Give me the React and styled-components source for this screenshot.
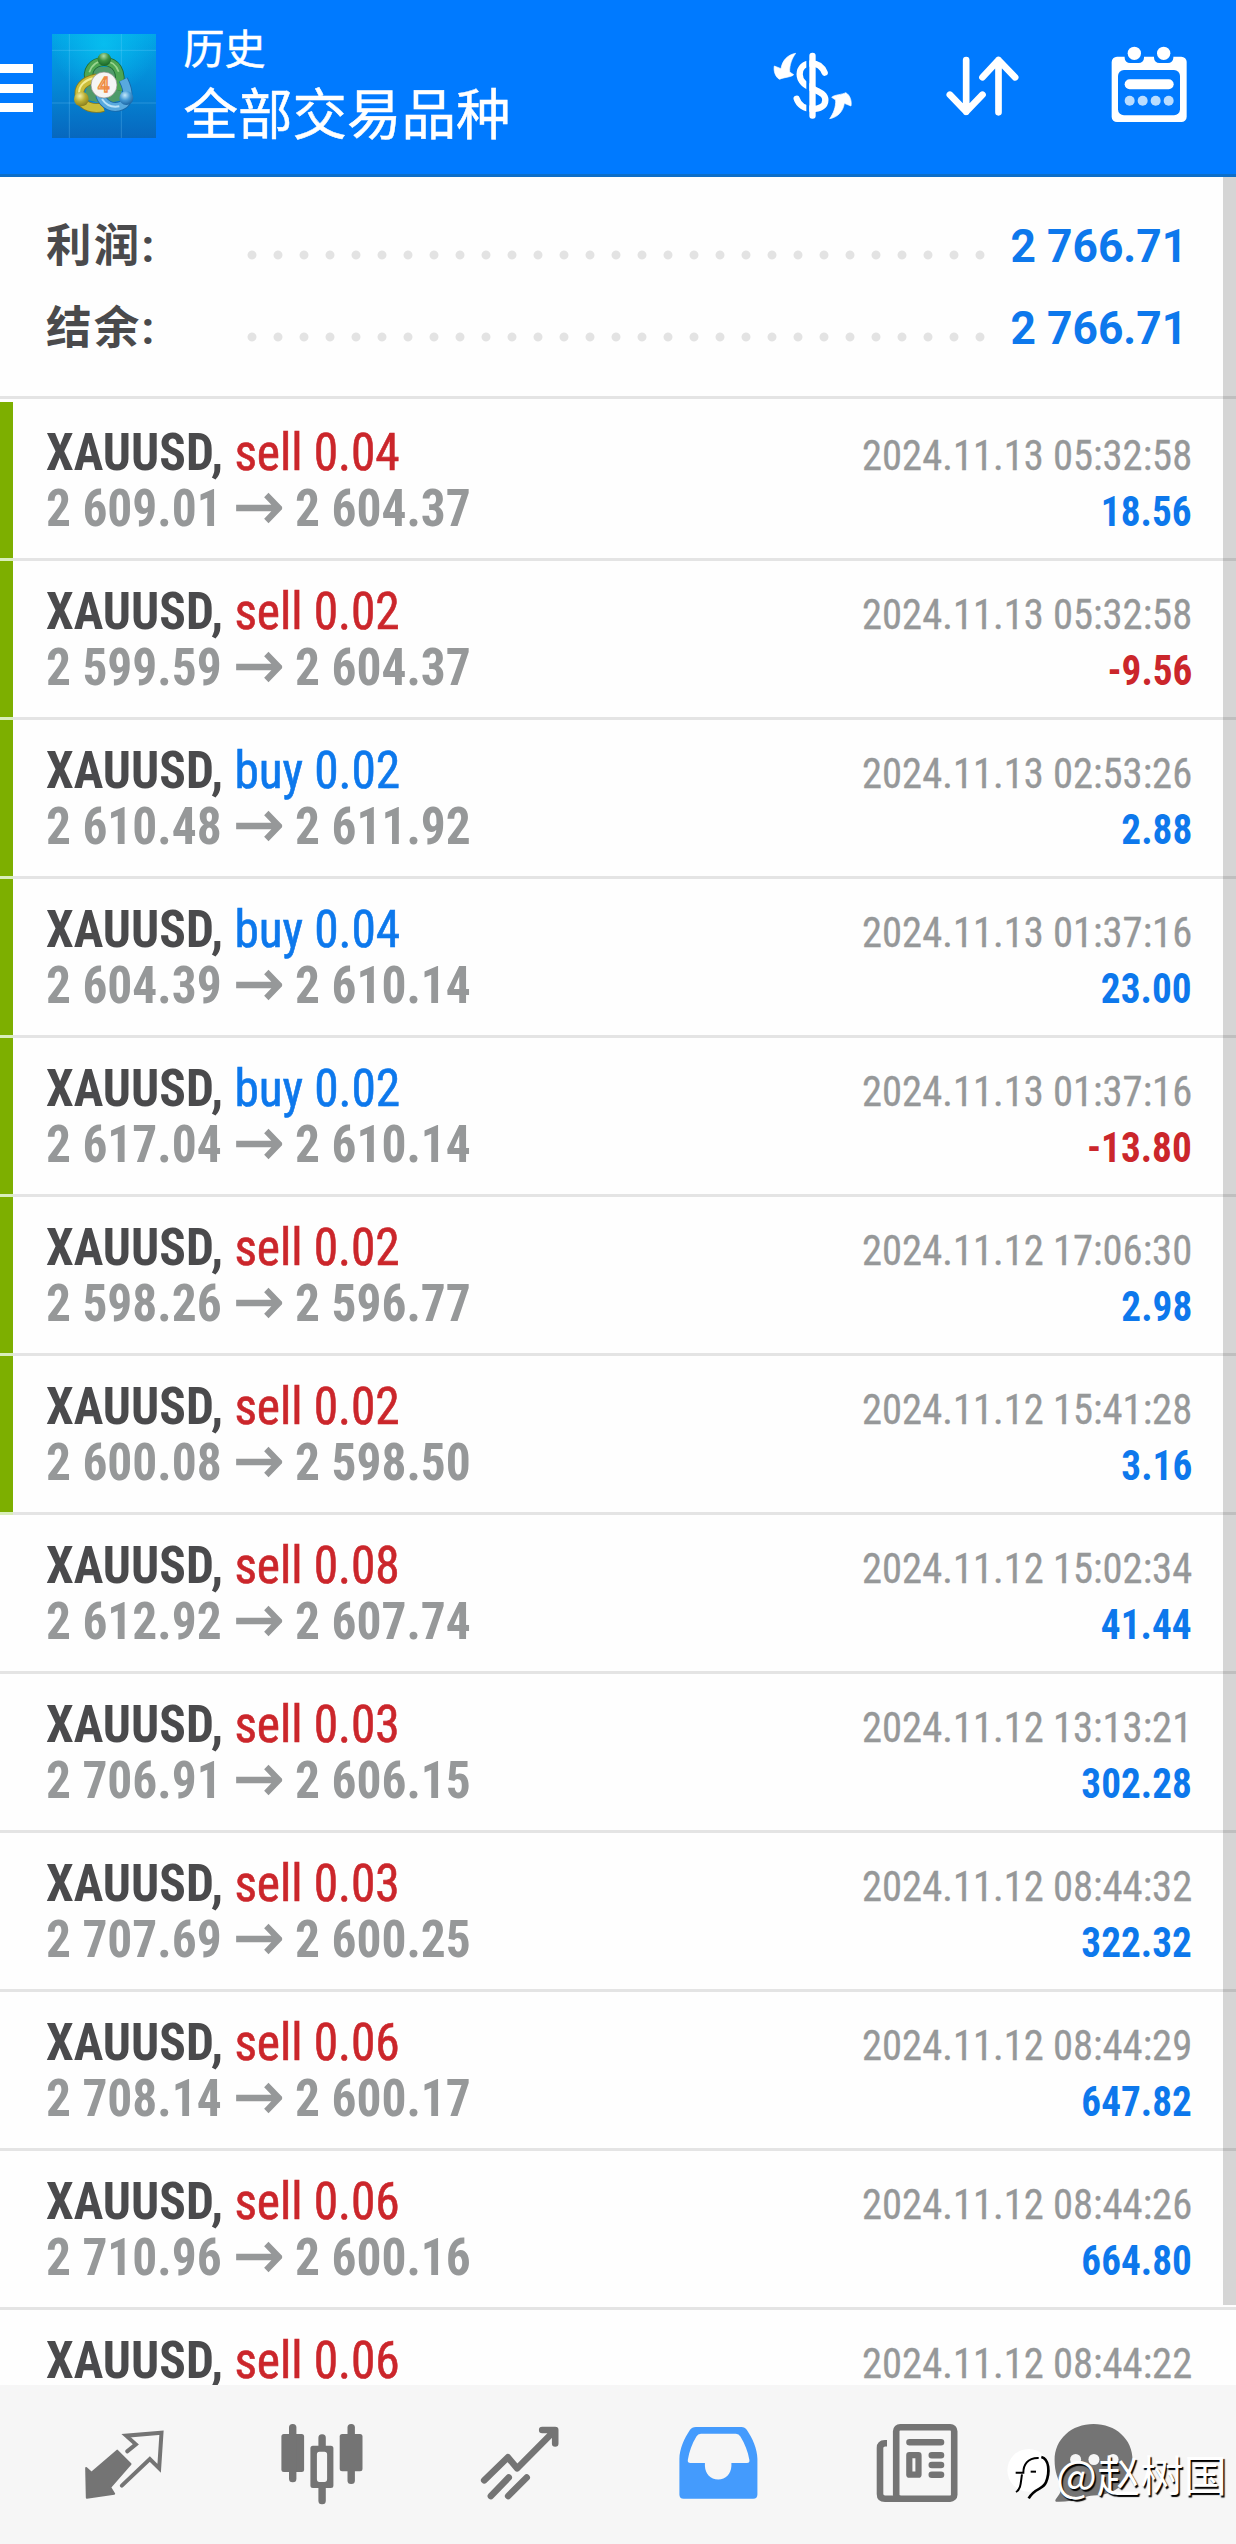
import React from "react";
import styled, { createGlobalStyle } from "styled-components";

const colors = {
  header: "#007aff",
  buy: "#0d78ec",
  sell: "#cb262b",
  dark: "#4a4a4c",
  muted: "#969899",
  line: "#e4e4e4",
  icon: "#747474",
  active: "#449bfd",
  closed: "#7daf00",
};

const GlobalStyle = createGlobalStyle`
  body {
    margin: 0;
    background: #fff;
  }
`;

const Screen = styled.div`
  position: relative;
  display: flex;
  flex-direction: column;
  width: 1236px;
  height: 2544px;
  overflow: hidden;
  background: #fefefe;
  font-family: Roboto, "Noto Sans CJK SC", sans-serif;
`;

const Header = styled.header`
  display: flex;
  align-items: flex-start;
  box-sizing: border-box;
  flex: none;
  height: 177px;
  background: ${colors.header};
  border-bottom: 3px solid #0d6ec8;
  color: #fff;
`;

const MenuButton = styled.div`
  display: flex;
  flex-direction: column;
  gap: 10.5px;
  width: 33px;
  margin: 64px 19px 0 0;
`;

const MenuBar = styled.span`
  height: 9px;
  background: #fff;
`;

const AppIcon = styled.svg`
  flex: none;
  width: 104px;
  height: 104px;
  margin-top: 34px;
`;

const Titles = styled.div`
  display: flex;
  flex-direction: column;
  flex: 1;
  margin: 16px 0 0 27.5px;
  font-family: "Noto Sans CJK SC", sans-serif;
  white-space: nowrap;
  -webkit-text-stroke: 0.5px #fff;
`;

const Subtitle = styled.div`
  font-size: 41px;
  line-height: 60px;
`;

const Title = styled.div`
  font-size: 54.5px;
  line-height: 70px;
`;

const HeaderActions = styled.div`
  display: flex;
  align-items: flex-start;
  gap: 92px;
  margin: 45px 49px 0 0;
`;

const ActionIcon = styled.svg`
  display: block;
  flex: none;
  width: ${(p) => p.$w}px;
  height: 78px;
`;

const Body = styled.main`
  position: relative;
  flex: none;
  height: 2208px;
  overflow: hidden;
`;

const Scrollbar = styled.div`
  position: absolute;
  top: 0;
  right: 0;
  width: 13px;
  height: 2128px;
  background: rgba(0, 0, 0, 0.16);
`;

const Summary = styled.section`
  box-sizing: border-box;
  height: 222px;
  padding: 28px 48.5px 0 46px;
  border-bottom: 3px solid ${colors.line};
  margin-bottom: 3px;
`;

const SummaryRow = styled.div`
  display: flex;
  align-items: flex-start;
  height: 82px;
  font-size: 45.5px;
  font-weight: 700;
  line-height: 83px;
  white-space: pre;
`;

const SummaryLabel = styled.span`
  width: 193px;
  color: ${colors.dark};
  letter-spacing: 2.2px;
`;

const Leader = styled.span`
  width: 754px;
  height: 26px;
  margin-top: 36.5px;
  background: radial-gradient(circle, #e3e3e3 4px, transparent 4.9px) 0 0 / 26px 26px repeat-x;
`;

const SummaryValue = styled.span`
  margin-left: auto;
  color: ${colors.buy};
  transform: scaleX(0.975);
  transform-origin: right;
`;

const Deal = styled.article`
  box-sizing: border-box;
  height: 159px;
  padding: 23px 44px 0 33px;
  border-left: 13px solid ${(p) => (p.$marked ? colors.closed : "transparent")};
  background: linear-gradient(${colors.line}, ${colors.line}) 0 100% / 100% 3px no-repeat;
  background-origin: ${(p) => (p.$marked ? "padding-box" : "border-box")};
`;

const MarkedSeam = styled.div`
  position: relative;
  width: 13px;
  height: 3px;
  margin-top: -3px;
  background: #d9eebb;
`;

const DealLine = styled.div`
  display: flex;
  align-items: baseline;
  justify-content: space-between;
  height: 56px;
  font-family: "Roboto Condensed", Roboto, sans-serif;
  font-stretch: condensed;
  line-height: 56px;
  white-space: pre;
`;

const Symbol = styled.div`
  color: ${colors.dark};
  font-size: 51.5px;
  font-weight: 700;
  transform: scaleX(0.96);
  transform-origin: left;
`;

const Side = styled.span`
  color: ${(p) => (p.$side === "buy" ? colors.buy : colors.sell)};
  font-weight: 400;
  letter-spacing: -0.1px;
  -webkit-text-stroke: 0.6px currentColor;
`;

const Prices = styled.div`
  display: flex;
  align-items: baseline;
  color: ${colors.muted};
  font-size: 51.5px;
  font-weight: 700;
  transform: scaleX(0.96);
  transform-origin: left;
`;

const PriceArrow = styled.svg`
  align-self: flex-start;
  width: 48px;
  height: 32px;
  margin: 11px 13.5px 0 15px;
  fill: none;
  stroke: currentColor;
  stroke-width: 6.4;
`;

const Time = styled.div`
  color: ${colors.muted};
  font-size: 42.2px;
  font-weight: 400;
  transform: scaleX(0.962);
  transform-origin: right;
  -webkit-text-stroke: 0.3px currentColor;
`;

const Profit = styled.div`
  color: ${(p) => (p.$loss ? colors.sell : colors.buy)};
  font-size: 42.2px;
  font-weight: 700;
  transform: scaleX(0.93);
  transform-origin: right;
`;

const TabBar = styled.nav`
  display: grid;
  grid-template-columns: repeat(5, 198.2px) 156px;
  box-sizing: border-box;
  flex: none;
  height: 159px;
  padding: 35px 0 0 25.4px;
  background: #f6f6f6;
`;

const Tab = styled.div`
  display: flex;
  justify-content: center;
  color: ${(p) => (p.$active ? colors.active : colors.icon)};
`;

const TabIcon = styled.svg`
  display: block;
  width: 90px;
  height: 90px;
  fill: currentColor;
`;

const Watermark = styled.div`
  position: absolute;
  left: 1004px;
  top: 2442px;
  display: flex;
  align-items: center;
  color: #fff;
  font-family: "Noto Sans CJK SC", sans-serif;
  font-size: 43.3px;
  font-weight: 400;
  line-height: 60px;
  white-space: nowrap;
  text-shadow: 1.5px 1.5px 1px #000;
`;

const WatermarkLogo = styled.svg`
  width: 52px;
  height: 56px;
  margin-top: 5px;
`;

function BrandIcon() {
  return (
    <AppIcon viewBox="36 31 312 312">
      <defs>
        <linearGradient id="tile" x1="0" y1="0" x2="0" y2="1">
          <stop offset="0" stopColor="#02a6e6" />
          <stop offset="0.5" stopColor="#0488d6" />
          <stop offset="1" stopColor="#0767be" />
        </linearGradient>
        <radialGradient id="glow" cx="0.5" cy="0.1" r="0.5">
          <stop offset="0" stopColor="#08c4f2" stopOpacity="0.8" />
          <stop offset="1" stopColor="#08c4f2" stopOpacity="0" />
        </radialGradient>
        <radialGradient id="green" cx="0.45" cy="0.25" r="0.75">
          <stop offset="0" stopColor="#b2dba5" />
          <stop offset="0.5" stopColor="#3c9143" />
          <stop offset="1" stopColor="#176428" />
        </radialGradient>
        <radialGradient id="yellow" cx="0.4" cy="0.3" r="0.75">
          <stop offset="0" stopColor="#f4efa2" />
          <stop offset="0.5" stopColor="#b9ad32" />
          <stop offset="1" stopColor="#84791c" />
        </radialGradient>
        <radialGradient id="blue" cx="0.4" cy="0.3" r="0.75">
          <stop offset="0" stopColor="#c3e8fb" />
          <stop offset="0.5" stopColor="#4499d4" />
          <stop offset="1" stopColor="#17609f" />
        </radialGradient>
      </defs>
      <rect x="36" y="31" width="312" height="312" fill="url(#tile)" />
      <rect x="36" y="31" width="312" height="312" fill="url(#glow)" />
      <path d="M88 31V343M244 31V343M36 80H348M36 238H348" stroke="#8fdcff" strokeOpacity="0.3" strokeWidth="2.5" />
      <path d="M160 130H226L250 230L190 240L130 226Z" fill="#4f9a6a" />
      <g fill="none">
        <path d="M150 176C136 140 158 114 192 114S250 140 236 200" stroke="#1f6b35" strokeWidth="28" />
        <path d="M150 176C136 140 158 114 192 114S250 140 236 200" stroke="#4da653" strokeWidth="23" />
        <path d="M148 146C155 124 172 112 192 112S228 122 236 144" stroke="#9ad48f" strokeWidth="5" />
        <path d="M190 250C162 258 128 250 120 222S128 172 170 164" stroke="#8a7d1c" strokeWidth="29" />
        <path d="M190 250C162 258 128 250 120 222S128 172 170 164" stroke="#cabd3a" strokeWidth="24" />
        <path d="M117 208C117 186 134 170 158 164" stroke="#f3ed92" strokeWidth="6" />
        <path d="M180 214C192 246 220 256 244 246S268 204 250 168" stroke="#1a68a8" strokeWidth="29" />
        <path d="M180 214C192 246 220 256 244 246S268 204 250 168" stroke="#58a9de" strokeWidth="24" />
        <path d="M186 226C198 244 218 252 238 248" stroke="#b9e2f8" strokeWidth="6" />
      </g>
      <circle cx="193" cy="107" r="20" fill="url(#green)" />
      <circle cx="124" cy="226" r="22" fill="url(#yellow)" />
      <circle cx="259" cy="223" r="21" fill="url(#blue)" />
      <circle cx="192" cy="184" r="39" fill="#f5f5f4" stroke="#8b8d88" strokeWidth="2" />
      <text
        x="191"
        y="206"
        textAnchor="middle"
        fontFamily="Roboto, sans-serif"
        fontSize="62"
        fontWeight="500"
        fill="#fbd9a4"
        stroke="#ee8a43"
        strokeWidth="4"
      >
        4
      </text>
    </AppIcon>
  );
}

const rotateArrow =
  "M93 40C70 44 53 60 49 86L29 78C26 92 32 112 45 118C55 112 80 112 87 104L75 96C74 75 82 55 93 40Z";

function CurrencyIcon() {
  return (
    <ActionIcon $w={82} viewBox="22 15 246 234">
      <path
        d="M180 98C172 78 158 70 140 70C118 70 105 84 105 103C105 125 122 135 143 146C165 157 182 162 182 180C182 199 165 207 143 207C120 207 102 195 96 176"
        fill="none"
        stroke="#fff"
        strokeWidth="19"
        strokeLinecap="round"
      />
      <path d="M125 50H134V225H125Z" fill={colors.header} />
      <rect x="134" y="38" width="19" height="198" rx="9" fill="#fff" />
      <path d={rotateArrow} fill="#fff" stroke="#fff" strokeWidth="2" strokeLinejoin="round" />
      <path
        d={rotateArrow}
        fill="#fff"
        stroke="#fff"
        strokeWidth="2"
        strokeLinejoin="round"
        transform="rotate(180 144 138)"
      />
    </ActionIcon>
  );
}

function SortIcon() {
  return (
    <ActionIcon $w={73} viewBox="616.5 135 219 234">
      <path
        d="M677 180V335M628 284L677 335L726 284M774 337V180M726 232L774 180L824 232"
        fill="none"
        stroke="#fff"
        strokeWidth="20"
        strokeLinecap="round"
        strokeLinejoin="round"
      />
    </ActionIcon>
  );
}

function CalendarIcon() {
  return (
    <ActionIcon $w={76} viewBox="1114 135 228 234">
      <rect x="1116" y="170" width="225" height="196" rx="16" fill="#fff" />
      <rect x="1135" y="210" width="186" height="136" rx="18" fill={colors.header} />
      <rect x="1155" y="140" width="58" height="49" rx="16" fill={colors.header} />
      <rect x="1243" y="140" width="58" height="49" rx="16" fill={colors.header} />
      <circle cx="1184" cy="160" r="20" fill="#fff" />
      <circle cx="1272" cy="160" r="20" fill="#fff" />
      <rect x="1155" y="238" width="147" height="30" rx="15" fill="#fff" />
      {[1170, 1209, 1248, 1287].map((x) => (
        <circle key={x} cx={x} cy="302" r="15" fill="#b9ddff" />
      ))}
    </ActionIcon>
  );
}

const line = { fill: "none", stroke: "currentColor", strokeLinecap: "round", strokeLinejoin: "round" };

function QuotesIcon() {
  return (
    <TabIcon viewBox="28.5 30 270 270">
      <path
        d="M143 122L183 162L122 232L134 251L52 263L50 174L66 188Z"
        stroke="currentColor"
        strokeWidth="6"
        strokeLinejoin="round"
      />
      <path d="M173 124L199 103L170 77L276 68L269 175L241 147L157 227" {...line} strokeLinejoin="miter" strokeWidth="12" />
    </TabIcon>
  );
}

function ChartIcon() {
  return (
    <TabIcon viewBox="277.6 2420 90 90">
      <rect x="281" y="2434" width="22.7" height="38" rx="2.5" />
      <rect x="288.6" y="2424" width="7.4" height="58.3" rx="3.5" />
      <rect x="339.3" y="2434" width="22.8" height="37.3" rx="2.5" />
      <rect x="347.1" y="2424" width="7.4" height="60" rx="3.5" />
      <rect x="318" y="2434.3" width="7.4" height="15" rx="3.5" />
      <rect x="318" y="2484" width="7.4" height="20.2" rx="3.5" />
      <path
        fillRule="evenodd"
        d="M312.5 2445.7H330.5Q333 2445.7 333 2448.2V2485.5Q333 2488 330.5 2488H312.5Q310 2488 310 2485.5V2448.2Q310 2445.7 312.5 2445.7ZM319 2451.7Q316.5 2451.7 316.5 2454.5V2479Q316.5 2482 319 2482H324Q326.7 2482 326.7 2479V2454.5Q326.7 2451.7 324 2451.7Z"
      />
    </TabIcon>
  );
}

function TradeIcon() {
  return (
    <TabIcon viewBox="475.8 2420 90 90">
      <path
        d="M484 2480.3L507.7 2457.3L517 2468.3L553.5 2431.5M542 2430H555V2443.5M490.7 2496L508.5 2477.5M508 2496L526.5 2477.5"
        {...line}
        strokeWidth="6.6"
      />
    </TabIcon>
  );
}

function HistoryIcon() {
  return (
    <TabIcon viewBox="673.6 2420 90 90">
      <path
        fillRule="evenodd"
        d="M695.5 2427H741Q744.5 2427 746.5 2430C752 2438 757 2449 757 2459V2494.5Q757 2498.7 752.8 2498.7H683.2Q679 2498.7 679 2494.5V2459C679 2449 684 2438 689.5 2430Q691.5 2427 695.5 2427ZM700.5 2433.8Q697.5 2433.8 696 2436.5C691.5 2444 689 2451 687.4 2460Q687 2463 690 2463H704.5V2466C705 2474 710 2479.5 717.8 2479.5C725.5 2479.5 730.5 2474 731 2466V2463H746.5Q749.5 2463 749 2460C747.4 2451 744.5 2444 740 2436.5Q738.5 2433.8 735.5 2433.8Z"
      />
    </TabIcon>
  );
}

function NewsIcon() {
  return (
    <TabIcon viewBox="871.5 2420 90 90">
      <rect x="895.7" y="2427.2" width="58" height="71.5" rx="4" {...line} strokeWidth="6.6" />
      <path
        d="M886.5 2443.3H884.5Q879.5 2443.5 879.5 2448V2494Q879.5 2498.7 884.5 2498.7H900"
        {...line}
        strokeLinecap="butt"
        strokeWidth="6.6"
      />
      <path d="M909 2442.3H940.5M931.3 2455.2H940.5M931.3 2465H940.5M931.3 2474.8H940.5" {...line} strokeWidth="6.6" />
      <rect x="908.8" y="2455.2" width="9.2" height="19.5" {...line} strokeWidth="6.2" />
    </TabIcon>
  );
}

function ChatIcon() {
  return (
    <TabIcon viewBox="1048.4 2420 90 90">
      <path d="M1093 2424C1115 2424 1132 2439 1132 2460C1132 2481 1115 2495.5 1093 2495.5C1089 2495.5 1086 2496.5 1082 2498C1074 2501 1064 2502 1055.5 2501.7Q1054 2501.5 1055 2499.5Q1059.5 2494 1062 2487C1057 2480 1054 2471 1054 2460C1054 2439 1071 2424 1093 2424Z" />
      <g fill="#f6f6f6">
        <circle cx="1075" cy="2459.5" r="5.5" />
        <circle cx="1093.3" cy="2459.5" r="5.5" />
        <circle cx="1112.5" cy="2459.5" r="5.5" />
      </g>
    </TabIcon>
  );
}

const summary = [
  { label: "利润:", value: "2 766.71" },
  { label: "结余:", value: "2 766.71" },
];

const deals = [
  ["sell", "0.04", "2 609.01", "2 604.37", "2024.11.13 05:32:58", "18.56", true],
  ["sell", "0.02", "2 599.59", "2 604.37", "2024.11.13 05:32:58", "-9.56", true],
  ["buy", "0.02", "2 610.48", "2 611.92", "2024.11.13 02:53:26", "2.88", true],
  ["buy", "0.04", "2 604.39", "2 610.14", "2024.11.13 01:37:16", "23.00", true],
  ["buy", "0.02", "2 617.04", "2 610.14", "2024.11.13 01:37:16", "-13.80", true],
  ["sell", "0.02", "2 598.26", "2 596.77", "2024.11.12 17:06:30", "2.98", true],
  ["sell", "0.02", "2 600.08", "2 598.50", "2024.11.12 15:41:28", "3.16", true],
  ["sell", "0.08", "2 612.92", "2 607.74", "2024.11.12 15:02:34", "41.44", false],
  ["sell", "0.03", "2 706.91", "2 606.15", "2024.11.12 13:13:21", "302.28", false],
  ["sell", "0.03", "2 707.69", "2 600.25", "2024.11.12 08:44:32", "322.32", false],
  ["sell", "0.06", "2 708.14", "2 600.17", "2024.11.12 08:44:29", "647.82", false],
  ["sell", "0.06", "2 710.96", "2 600.16", "2024.11.12 08:44:26", "664.80", false],
  ["sell", "0.06", null, null, "2024.11.12 08:44:22", null, false],
];

function DealRow({ deal }) {
  const [side, volume, open, close, time, profit, marked] = deal;
  return (
    <>
      <Deal $marked={marked}>
        <DealLine>
          <Symbol>
            XAUUSD, <Side $side={side}>{`${side} ${volume}`}</Side>
          </Symbol>
          <Time>{time}</Time>
        </DealLine>
        {open && (
          <DealLine>
            <Prices>
              <span>{open}</span>
              <PriceArrow viewBox="0 0 48 32" preserveAspectRatio="none">
                <path d="M0 16H44M31.5 3L44.5 16L31.5 29" />
              </PriceArrow>
              <span>{close}</span>
            </Prices>
            <Profit $loss={profit.startsWith("-")}>{profit}</Profit>
          </DealLine>
        )}
      </Deal>
      {marked && <MarkedSeam />}
    </>
  );
}

export default function App() {
  return (
    <Screen>
      <GlobalStyle />
      <Header>
        <MenuButton>
          <MenuBar />
          <MenuBar />
          <MenuBar />
        </MenuButton>
        <BrandIcon />
        <Titles>
          <Subtitle>历史</Subtitle>
          <Title>全部交易品种</Title>
        </Titles>
        <HeaderActions>
          <CurrencyIcon />
          <SortIcon />
          <CalendarIcon />
        </HeaderActions>
      </Header>
      <Body>
        <Summary>
          {summary.map((row) => (
            <SummaryRow key={row.label}>
              <SummaryLabel>{row.label}</SummaryLabel>
              <Leader />
              <SummaryValue>{row.value}</SummaryValue>
            </SummaryRow>
          ))}
        </Summary>
        {deals.map((deal, i) => (
          <DealRow key={i} deal={deal} />
        ))}
        <Scrollbar />
      </Body>
      <TabBar>
        <Tab><QuotesIcon /></Tab>
        <Tab><ChartIcon /></Tab>
        <Tab><TradeIcon /></Tab>
        <Tab $active><HistoryIcon /></Tab>
        <Tab><NewsIcon /></Tab>
        <Tab><ChatIcon /></Tab>
      </TabBar>
      <Watermark>
        <WatermarkLogo viewBox="72 276 156 168">
          <circle cx="146" cy="346" r="64" fill="#fff" />
          <g fill="none" stroke="#000" strokeWidth="6">
            <path d="M184 306C208 312 210 352 198 382C188 406 166 396 146 430" strokeWidth="8" />
            <path d="M107 353H130C130 330 142 308 176 309" />
            <path d="M126 358C122 380 124 402 108 411" />
            <path d="M152 350H168" />
          </g>
        </WatermarkLogo>
        <span>@赵树国</span>
      </Watermark>
    </Screen>
  );
}
